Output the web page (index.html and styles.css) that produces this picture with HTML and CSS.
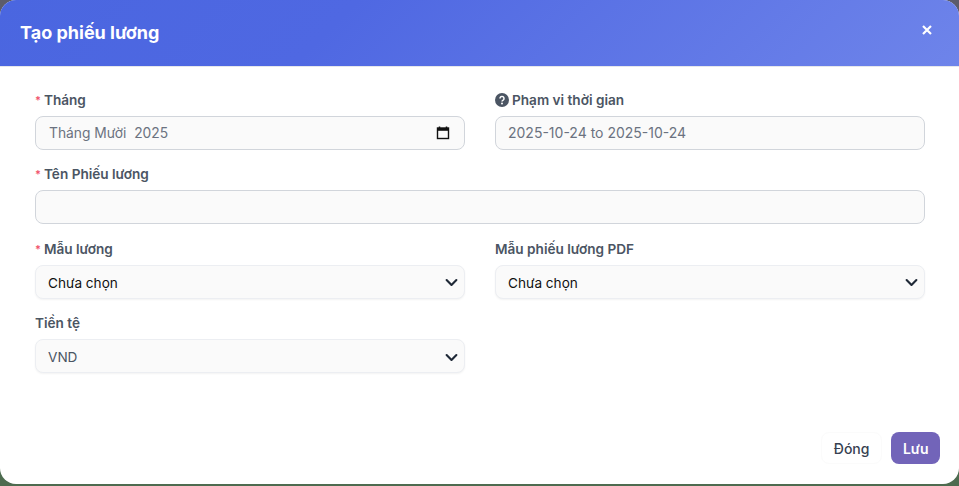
FILE: index.html

```html
<!DOCTYPE html>
<html>
<head>
    <title>Tạo phiếu lương</title>
    <link rel="stylesheet" href="styles.css">
</head>
<body>
    <div class="modal">
        <div class="modal-header">
            <h1>Tạo phiếu lương</h1>
            <button class="close" aria-label="Đóng">
                <svg width="10" height="10" viewBox="0 0 10 10"><path d="M1 1l8 8M9 1l-8 8" stroke="#fff" stroke-width="2.2" fill="none"/></svg>
            </button>
        </div>
        <div class="modal-body">
            <div class="form-grid">
                <div class="field">
                    <label><span class="req">*</span>Tháng</label>
                    <div class="control month-input">
                        <span>Tháng Mười&nbsp; 2025</span>
                        <svg width="14" height="14" viewBox="0 0 14 14"><path d="M3.5 0.5v2M10.5 0.5v2" stroke="#111" stroke-width="1.5" fill="none"/><rect x="1.5" y="2" width="11" height="10.5" fill="none" stroke="#111" stroke-width="1.4"/><rect x="1.5" y="2" width="11" height="2.8" fill="#111"/></svg>
                    </div>
                </div>
                <div class="field">
                    <label>
                        <svg class="help" width="14" height="14" viewBox="0 0 14 14"><circle cx="7" cy="7" r="7" fill="#4b5563"/><path d="M5 5.4a2 2 0 1 1 3.1 1.7c-.7.4-1.1.8-1.1 1.5" stroke="#fff" stroke-width="1.5" fill="none"/><circle cx="7" cy="10.6" r="1" fill="#fff"/></svg>Phạm vi thời gian
                    </label>
                    <input class="control" type="text" value="2025-10-24 to 2025-10-24" readonly>
                </div>
                <div class="field span-2">
                    <label><span class="req">*</span>Tên Phiếu lương</label>
                    <input class="control" type="text">
                </div>
                <div class="field">
                    <label><span class="req">*</span>Mẫu lương</label>
                    <select class="control select dark"><option>Chưa chọn</option></select>
                </div>
                <div class="field">
                    <label>Mẫu phiếu lương PDF</label>
                    <select class="control select dark"><option>Chưa chọn</option></select>
                </div>
                <div class="field">
                    <label>Tiền tệ</label>
                    <select class="control select"><option>VND</option></select>
                </div>
            </div>
        </div>
        <div class="modal-footer">
            <button class="btn btn-light">Đóng</button>
            <button class="btn btn-primary">Lưu</button>
        </div>
    </div>
</body>
</html>
```

FILE: styles.css

```css
* { box-sizing: border-box; }
html, body { height: 100%; }
body {
    margin: 0;
    overflow: hidden;
    font-family: Inter, "Noto Sans", sans-serif;
    background: linear-gradient(#5c5c6b 0, #5c5c6b 60px, #4d6b4f 60px);
}
.modal {
    width: 959px;
    height: 484px;
    display: flex;
    flex-direction: column;
    background: #fff;
    border-radius: 16px;
    overflow: hidden;
}
.modal-header {
    height: 67px;
    flex-shrink: 0;
    display: flex;
    align-items: center;
    justify-content: space-between;
    padding: 0 27px 2px 20px;
    background: linear-gradient(135deg, #4a66e0 0%, #4f68e2 35%, #6e84ea 100%);
    border-bottom: 1px solid #e5e7eb;
}
.modal-header h1 {
    margin: 0;
    font-size: 18px;
    font-weight: 700;
    color: #fff;
}
.close {
    display: flex;
    padding: 0;
    border: 0;
    background: none;
    margin-bottom: 5px;
}
.modal-body {
    flex: 1;
    padding: 23px 34px 0 35px;
}
.form-grid {
    display: grid;
    grid-template-columns: 430px 430px;
    column-gap: 30px;
    row-gap: 14.4px;
}
.span-2 { grid-column: span 2; }
label {
    display: flex;
    align-items: center;
    height: 20px;
    margin-bottom: 6px;
    font-size: 13.6px;
    font-weight: 600;
    color: #4b5563;
}
.req {
    color: #f1556c;
    margin-right: 3px;
    font-size: 11px;
}
.help { margin-right: 3px; }
.control {
    display: block;
    width: 100%;
    height: 34px;
    padding: 0 12px 1px;
    font-family: inherit;
    font-size: 14px;
    color: #6b7280;
    background-color: #fafafa;
    border: 1px solid #d1d5db;
    border-radius: 8px;
    outline: none;
}
.month-input {
    display: flex;
    align-items: center;
    justify-content: space-between;
    padding: 0 14px 1px 13px;
    font-size: 13.8px;
}
.select {
    appearance: none;
    padding: 2px 12px 0;
    font-size: 13.6px;
    color: #4b5563;
    border-color: #eceef2;
    box-shadow: 0 1px 2px rgba(0, 0, 0, 0.05);
    background-image: url("data:image/svg+xml,%3Csvg xmlns='http://www.w3.org/2000/svg' viewBox='0 0 16 16'%3E%3Cpath fill='none' stroke='%231f2937' stroke-linecap='round' stroke-linejoin='round' stroke-width='2.6' d='M2 5l6 6 6-6'/%3E%3C/svg%3E");
    background-repeat: no-repeat;
    background-position: right 6px top 10.5px;
    background-size: 13px 13px;
}
.dark { color: #111; }
.modal-footer {
    display: flex;
    justify-content: flex-end;
    align-items: flex-end;
    gap: 9px;
    padding: 0 19px 20px 0;
}
.btn {
    height: 32px;
    padding: 1px 10.5px 0;
    font-family: inherit;
    font-size: 14px;
    font-weight: 500;
    border-radius: 8px;
    border: 1px solid transparent;
}
.btn-light {
    padding: 1px 12px 0;
    color: #374151;
    background: #fff;
    border-color: #fbfbfb;
}
.btn-primary {
    color: #fff;
    font-weight: 600;
    background: #7264b9;
}
```
